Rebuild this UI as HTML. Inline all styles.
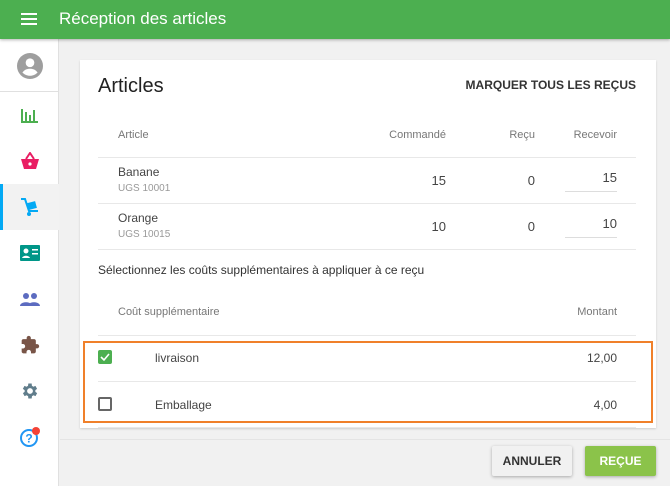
<!DOCTYPE html><html><head><meta charset="utf-8"><style>
*{box-sizing:border-box;margin:0;padding:0}
body{width:670px;height:486px;overflow:hidden;background:#f1f1f1;font-family:"Liberation Sans",sans-serif;position:relative;color:#333}
.hdr{position:absolute;left:0;top:0;width:670px;height:39px;background:#4caf50;box-shadow:0 1px 3px rgba(0,0,0,.3);z-index:2}
.hdr .t{position:absolute;left:59px;top:9px;color:#fff;font-size:17px}
.side{position:absolute;left:0;top:39px;width:59px;height:447px;background:#fff;border-right:1px solid #e0e0e0}
.ic{position:absolute;left:0;width:59px;height:46px;display:flex;align-items:center;justify-content:center}
.card{position:absolute;left:80px;top:60px;width:576px;height:368px;background:#fff;box-shadow:0 1px 2px rgba(0,0,0,.15)}
.a{position:absolute;white-space:nowrap}
.hl{position:absolute;left:18px;width:538px;height:1px;background:#e8e8e8}
.sm{font-size:11px;color:#777}
.n{font-size:13px;color:#444}
.btn{position:absolute;top:446px;height:30px;font-size:12px;font-weight:bold;display:flex;align-items:center;justify-content:center;box-shadow:0 1px 3px rgba(0,0,0,.3);border-radius:2px}
</style></head><body>
<div class="hdr"><svg style="position:absolute;left:21px;top:13px" width="16" height="12"><rect y="0" width="16" height="2" fill="#fff"/><rect y="5" width="16" height="2" fill="#fff"/><rect y="10" width="16" height="2" fill="#fff"/></svg><div class="t">Réception des articles</div></div>
<div class="side">
<div class="ic" style="top:4px"><svg width="26" height="26" viewBox="0 0 24 24"><circle cx="12" cy="12" r="12" fill="#9e9e9e"/><circle cx="12" cy="9" r="4" fill="#fff"/><path d="M5 18c2-3 5-3.5 7-3.5s5 .5 7 3.5c-2 2-4 3-7 3s-5-1-7-3z" fill="#fff"/></svg></div>
<div style="position:absolute;left:0;top:52px;width:59px;height:1px;background:#e0e0e0"></div>
<div class="ic" style="top:53px"><svg width="18" height="16" viewBox="0 0 18 16"><path d="M1 2v13h16" stroke="#4caf50" stroke-width="2" fill="none"/><rect x="4" y="5" width="2" height="9" fill="#4caf50"/><rect x="8" y="8" width="2" height="6" fill="#4caf50"/><rect x="12" y="3" width="2" height="11" fill="#4caf50"/></svg></div>
<div class="ic" style="top:99px"><svg width="20" height="18" viewBox="0 0 20 18"><path d="M6 7l4-6 4 6" stroke="#e91e63" stroke-width="2" fill="none"/><path d="M1 7h18l-3 10H4z" fill="#e91e63"/><circle cx="10" cy="12" r="1.6" fill="#fff"/></svg></div>
<div style="position:absolute;left:0;top:145px;width:59px;height:46px;background:#f2f2f2;border-left:3px solid #03a9f4"></div>
<div class="ic" style="top:145px"><svg width="20" height="20" viewBox="0 0 20 20"><path d="M1 2h4l4 12h9" stroke="#03a9f4" stroke-width="2" fill="none"/><rect x="8" y="5" width="8" height="7" fill="#03a9f4" transform="rotate(-15 12 8)"/><circle cx="9" cy="17" r="2" fill="#03a9f4"/></svg></div>
<div class="ic" style="top:191px"><svg width="20" height="16" viewBox="0 0 20 16"><rect width="20" height="16" rx="1" fill="#009688"/><circle cx="6" cy="6" r="2.5" fill="#fff"/><path d="M2 13c1-3 7-3 8 0z" fill="#fff"/><rect x="12" y="4" width="6" height="1.5" fill="#fff"/><rect x="12" y="8" width="6" height="1.5" fill="#fff"/></svg></div>
<div class="ic" style="top:237px"><svg width="20" height="14" viewBox="0 0 20 14"><circle cx="6" cy="4" r="3" fill="#5c6bc0"/><circle cx="14" cy="4" r="3" fill="#5c6bc0"/><path d="M0 14c0-5 12-5 12 0z M8 14c0-5 12-5 12 0z" fill="#5c6bc0"/></svg></div>
<div class="ic" style="top:283px"><svg width="20" height="20" viewBox="0 0 24 24"><path d="M20.5 11H19V7c0-1.1-.9-2-2-2h-4V3.5a2.5 2.5 0 0 0-5 0V5H4c-1.1 0-2 .9-2 2v3.8h1.5c1.5 0 2.7 1.200 2.7 2.7S5 16.2 3.5 16.2H2V20c0 1.1.9 2 2 2h3.8v-1.5c0-1.5 1.2-2.7 2.7-2.7s2.7 1.2 2.7 2.7V22H17c1.1 0 2-.9 2-2v-4h1.5a2.5 2.5 0 0 0 0-5z" fill="#795548"/></svg></div>
<div class="ic" style="top:329px"><svg width="20" height="20" viewBox="0 0 24 24"><path d="M19.4 13a7.5 7.5 0 0 0 0-2l2.1-1.6-2-3.5-2.5 1a7 7 0 0 0-1.7-1L15 3h-4l-.4 2.9a7 7 0 0 0-1.7 1l-2.5-1-2 3.5L6.6 11a7.5 7.5 0 0 0 0 2l-2.1 1.6 2 3.5 2.5-1a7 7 0 0 0 1.7 1L11 21h4l.4-2.9a7 7 0 0 0 1.7-1l2.5 1 2-3.5zM13 15.5a3.5 3.5 0 1 1 0-7 3.5 3.5 0 0 1 0 7z" fill="#607d8b" transform="translate(-1 0)"/></svg></div>
<div class="ic" style="top:375px"><svg width="24" height="24" viewBox="0 0 24 24"><circle cx="11" cy="13" r="8" stroke="#2196f3" stroke-width="2" fill="none"/><text x="11" y="17.5" font-size="12" font-weight="bold" fill="#2196f3" text-anchor="middle" font-family="Liberation Sans">?</text><circle cx="18" cy="6" r="4" fill="#f44336"/></svg></div>
</div>
<div class="card">
<div class="a" style="left:18px;top:15px;font-size:20px;color:#222">Articles</div>
<div class="a" style="right:20px;top:18px;font-size:12px;font-weight:bold;color:#333">MARQUER TOUS LES REÇUS</div>
<div class="a sm" style="left:38px;top:69px">Article</div>
<div class="a sm" style="right:210px;top:69px">Commandé</div>
<div class="a sm" style="right:121px;top:69px">Reçu</div>
<div class="a sm" style="right:39px;top:69px">Recevoir</div>
<div class="hl" style="top:97px"></div>
<div class="a n" style="left:38px;top:105px;font-size:12px">Banane</div>
<div class="a" style="left:38px;top:123px;font-size:10px;color:#999">UGS 10001</div>
<div class="a n" style="right:210px;top:113px">15</div>
<div class="a n" style="right:121px;top:113px">0</div>
<div class="a n" style="right:39px;top:110px">15</div>
<div style="position:absolute;left:485px;top:131px;width:52px;height:1px;background:#ddd"></div>
<div class="hl" style="top:143px"></div>
<div class="a n" style="left:38px;top:151px;font-size:12px">Orange</div>
<div class="a" style="left:38px;top:169px;font-size:10px;color:#999">UGS 10015</div>
<div class="a n" style="right:210px;top:159px">10</div>
<div class="a n" style="right:121px;top:159px">0</div>
<div class="a n" style="right:39px;top:156px">10</div>
<div style="position:absolute;left:485px;top:177px;width:52px;height:1px;background:#ddd"></div>
<div class="hl" style="top:189px"></div>
<div class="a" style="left:18px;top:203px;font-size:12px;color:#333">Sélectionnez les coûts supplémentaires à appliquer à ce reçu</div>
<div class="a sm" style="left:38px;top:246px">Coût supplémentaire</div>
<div class="a sm" style="right:39px;top:246px">Montant</div>
<div class="hl" style="top:275px"></div>
<div class="hl" style="top:321px"></div>
<div class="hl" style="top:367px"></div>
<div class="a n" style="left:75px;top:291px;font-size:12px">livraison</div>
<div class="a n" style="right:39px;top:291px;font-size:12px">12,00</div>
<div class="a n" style="left:75px;top:338px;font-size:12px">Emballage</div>
<div class="a n" style="right:39px;top:338px;font-size:12px">4,00</div>
<div style="position:absolute;left:18px;top:290px;width:14px;height:14px;background:#4caf50;border-radius:2px"><svg width="14" height="14"><path d="M3 7l3 3 5-6" stroke="#fff" stroke-width="1.6" fill="none"/></svg></div>
<div style="position:absolute;left:18px;top:337px;width:14px;height:14px;border:2px solid #666;border-radius:2px"></div>
</div>
<div style="position:absolute;left:83px;top:341px;width:570px;height:82px;border:2px solid #f0802a"></div>
<div style="position:absolute;left:60px;top:439px;width:610px;height:1px;background:#e4e4e4"></div>
<div class="btn" style="left:492px;width:80px;background:#f1f1f1;color:#333">ANNULER</div>
<div class="btn" style="left:585px;width:71px;background:#8bc34a;color:#fff">REÇUE</div>
</body></html>
